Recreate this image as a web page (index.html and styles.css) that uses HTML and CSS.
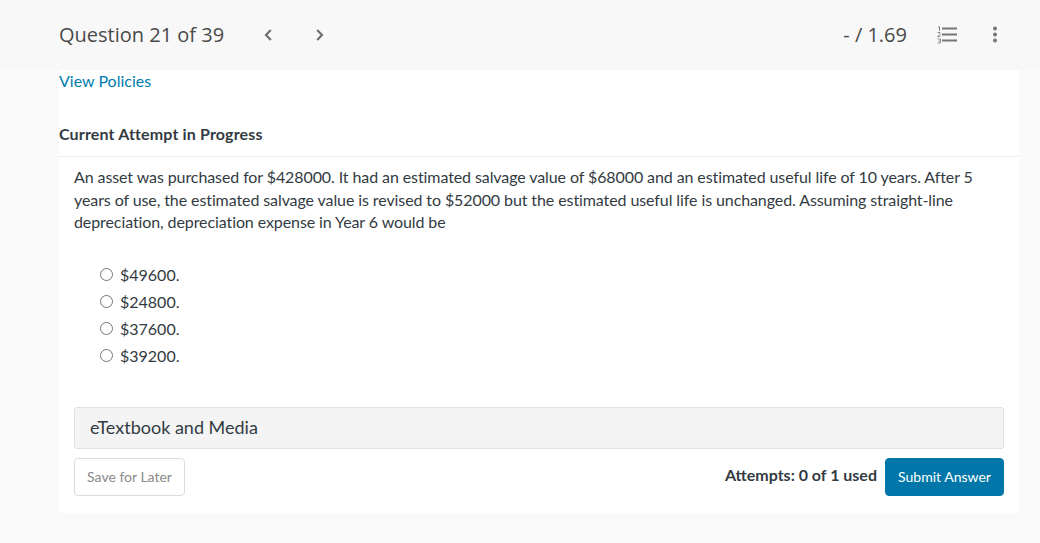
FILE: index.html
```html
<!DOCTYPE html>
<html lang="en">
<head>
<meta charset="utf-8">
<title>Question 21 of 39</title>
<link rel="stylesheet" href="styles.css">
</head>
<body>
<header class="topbar">
  <div class="nav">
    <h1 class="qnum">Question 21 of 39</h1>
    <svg class="chev chev-prev" width="10" height="14" viewBox="0 0 10 14"><path d="M7.800 2 3 7l4.800 5" fill="none" stroke="#6f6f6f" stroke-width="2.200"/></svg>
    <svg class="chev chev-next" width="10" height="14" viewBox="0 0 10 14"><path d="M2.200 2 7 7l-4.800 5" fill="none" stroke="#6f6f6f" stroke-width="2.200"/></svg>
  </div>
  <div class="tools">
    <span class="score">- / 1.69</span>
    <svg class="list-icon" width="20" height="18" viewBox="0 0 20 18">
      <path d="M5 2.500h15M5 8.500h15M5 14.500h15" stroke="#757575" stroke-width="2" fill="none"/>
      <path d="M1 1h1.500v3.500M2.500 0.500v4M0.500 6.500h2.500v2l-2.500 2h3M0.500 13h3v4h-3M1.500 15h2" stroke="#757575" stroke-width="0.800" fill="none"/>
    </svg>
    <svg class="dots" width="6" height="18" viewBox="0 0 6 18"><circle cx="3" cy="2.500" r="2" fill="#757575"/><circle cx="3" cy="8.500" r="2" fill="#757575"/><circle cx="3" cy="14.500" r="2" fill="#757575"/></svg>
  </div>
</header>
<main class="card">
  <a class="policies" href="#">View Policies</a>
  <h2 class="attempt">Current Attempt in Progress</h2>
  <section class="question">
    <p class="prompt">An asset was purchased for $428000. It had an estimated salvage value of $68000 and an estimated useful life of 10 years. After 5 years of use, the estimated salvage value is revised to $52000 but the estimated useful life is unchanged. Assuming straight-line depreciation, depreciation expense in Year 6 would be</p>
    <ul class="options">
      <li class="option"><span class="radio"></span>$49600.</li>
      <li class="option"><span class="radio"></span>$24800.</li>
      <li class="option"><span class="radio"></span>$37600.</li>
      <li class="option"><span class="radio"></span>$39200.</li>
    </ul>
    <div class="media">eTextbook and Media</div>
    <div class="actions">
      <button class="btn btn-save" type="button">Save for Later</button>
      <div class="submit-group">
        <span class="attempts">Attempts: 0 of 1 used</span>
        <button class="btn btn-submit" type="button">Submit Answer</button>
      </div>
    </div>
  </section>
</main>
</body>
</html>
```
FILE: styles.css
```css
* { box-sizing: border-box; }
html, body { margin: 0; padding: 0; }
body {
  height: 543px;
  overflow: hidden;
  background: #fafafa;
  font-family: Lato, sans-serif;
  color: #3c4043;
}
.topbar {
  height: 70px;
  background: #f8f8f8;
  padding: 0 42px 0 59px;
  display: flex;
  align-items: center;
  justify-content: space-between;
}
.nav { display: flex; align-items: center; }
.qnum {
  margin: 0;
  font: 400 20px/28px "Open Sans", sans-serif;
  color: #4a4a4a;
}
.chev-prev { margin-left: 39px; }
.chev-next { margin-left: 42px; }
.tools { display: flex; align-items: center; }
.score { font: 400 20px/28px "Open Sans", sans-serif; color: #4a4a4a; }
.list-icon { margin-left: 30px; }
.dots { margin-left: 35px; }
.card {
  width: 960px;
  height: 443px;
  margin-left: 59px;
  background: #fff;
}
.policies {
  display: block;
  font-size: 16px;
  line-height: 22px;
  color: #007cad;
  text-decoration: none;
}
.attempt {
  margin: 30px 0 0;
  padding-bottom: 10px;
  height: 35px;
  font-size: 16px;
  line-height: 24px;
  font-weight: 700;
  letter-spacing: 0.150px;
  color: #333b42;
  border-bottom: 1px solid #ebebeb;
}
.question { padding: 9px 15px 0; }
.prompt {
  margin: 0;
  font-size: 16px;
  line-height: 22.500px;
  letter-spacing: -0.095px;
  color: #333b42;
}
.options { list-style: none; margin: 27px 0 0; padding: 0 0 0 26px; }
.option {
  display: flex;
  align-items: center;
  height: 27px;
  font-size: 16px;
  color: #333b42;
}
.radio {
  width: 13px;
  height: 13px;
  margin-right: 7px;
  border: 1px solid #767676;
  border-radius: 50%;
  background: #fff;
}
.media {
  margin-top: 38px;
  height: 42px;
  padding-left: 15px;
  font-size: 18px;
  line-height: 38px;
  color: #333b42;
  background: #f4f4f4;
  border: 1px solid #e0e0e0;
  border-radius: 3px;
}
.actions {
  margin-top: 9px;
  display: flex;
  justify-content: space-between;
}
.btn {
  height: 38px;
  border-radius: 4px;
  font-family: Lato, sans-serif;
  font-size: 14px;
  padding: 0;
}
.btn-save {
  width: 111px;
  background: #fff;
  border: 1px solid #dcdcdc;
  color: #8a8a8a;
}
.submit-group { display: flex; align-items: flex-start; }
.attempts {
  margin-right: 8px;
  font-size: 16px;
  line-height: 34px;
  font-weight: 700;
  color: #333b42;
}
.btn-submit {
  width: 119px;
  background: #0077a8;
  border: 1px solid #0077a8;
  color: #fff;
}
```
